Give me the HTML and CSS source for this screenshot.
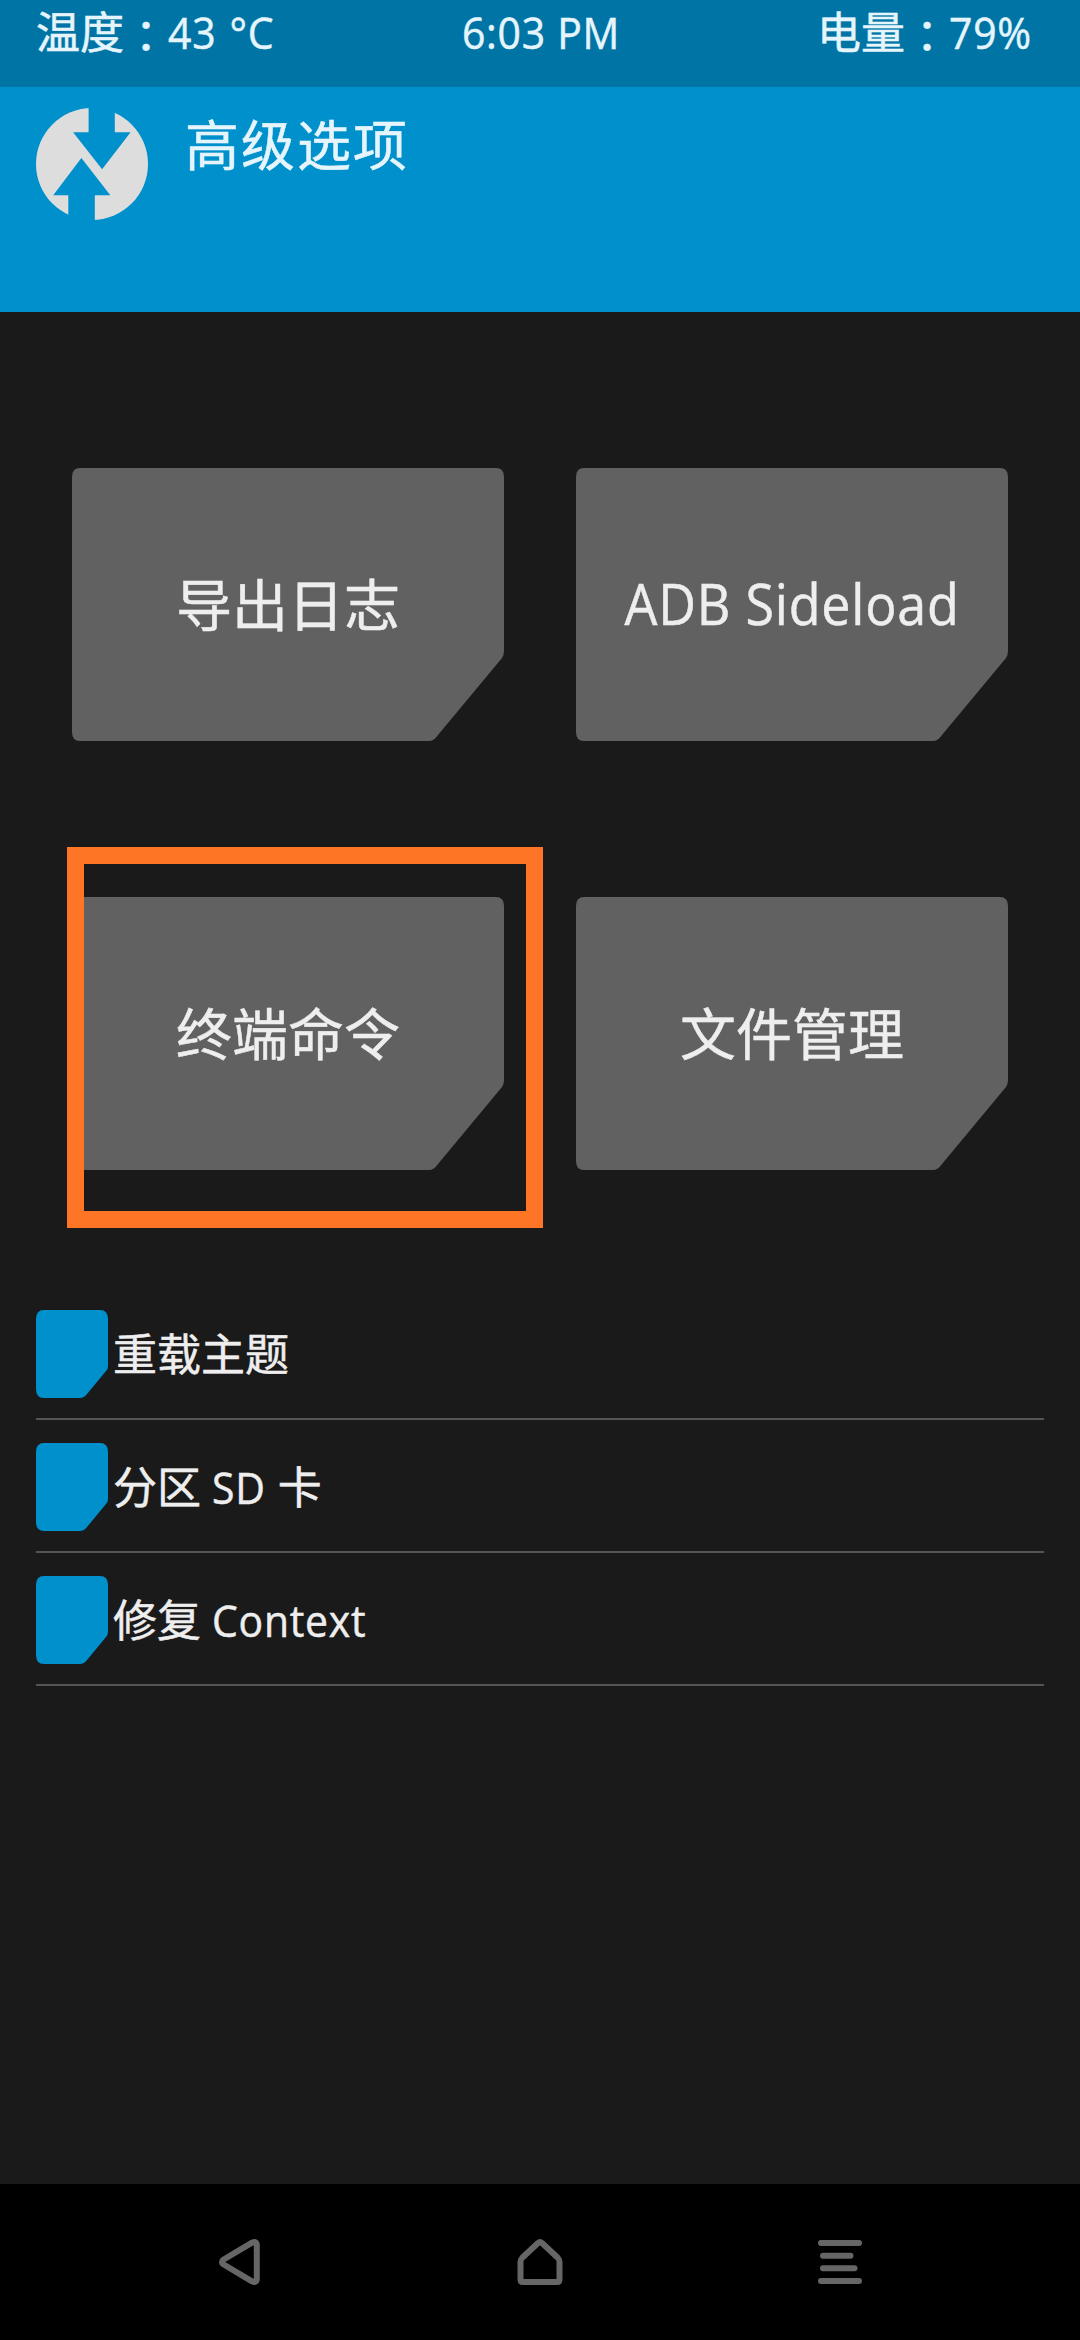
FILE: index.html
```html
<!DOCTYPE html>
<html lang="zh-CN">
<head>
<meta charset="utf-8">
<title>高级选项</title>
<link rel="stylesheet" href="styles.css">
</head>
<body>
<div class="screen">
  <div class="status">
    <span class="status-left">温度<span class="colon" lang="ja">：</span><span class="latin temp">43 °C</span></span>
    <span class="status-mid"><span class="latin time">6:03 PM</span></span>
    <span class="status-right">电量<span class="colon" lang="ja">：</span><span class="latin percent">79%</span></span>
  </div>
  <header class="header">
    <svg class="logo" viewBox="0 0 112 112">
      <circle class="logo-disc" cx="56" cy="56" r="56"/>
      <path class="logo-cut" d="M52.6-1H78.8V24.3H94.6L66.1 61.3L37.1 24.3H52.6ZM45.4 50L74.3 87.3H58.8V113H32.3V87.3H17.2Z"/>
    </svg>
    <h1 class="title">高级选项</h1>
  </header>
  <main class="main">
    <div class="tiles">
      <div class="tile-wrap"><div class="tile">导出日志</div></div>
      <div class="tile-wrap"><div class="tile tile-latin"><span class="latin sideload">ADB Sideload</span></div></div>
      <div class="tile-wrap"><div class="tile">终端命令</div><div class="highlight"></div></div>
      <div class="tile-wrap"><div class="tile">文件管理</div></div>
    </div>
    <ul class="list">
      <li class="row"><span class="chip"></span><span class="label">重载主题</span></li>
      <li class="row"><span class="chip"></span><span class="label">分区 <span class="latin sd">SD</span> 卡</span></li>
      <li class="row"><span class="chip"></span><span class="label">修复 <span class="latin">Context</span></span></li>
    </ul>
  </main>
  <nav class="nav">
    <svg class="nav-icon" viewBox="0 0 50 50"><path d="M6.200 22.500L34.500 5.700Q39.300 3.600 39.300 8.500V41.500Q39.300 46.400 34.500 44.300L6.200 27.500Q2.600 25 6.200 22.500Z" transform="translate(2.500 0)"/></svg>
    <svg class="nav-icon" viewBox="0 0 50 50"><path d="M25 5Q26 5 27 6L42.500 20.500Q44.500 22.500 44.500 24.500V42.500Q44.500 45 42 45H8Q5.500 45 5.500 42.500V24.500Q5.500 22.500 7.500 20.500L23 6Q24 5 25 5Z"/></svg>
    <svg class="nav-icon" viewBox="0 0 50 50"><path d="M6 6H44M8 18.700H35.500M8 31.300H39.500M6 44H44"/></svg>
  </nav>
</div>
</body>
</html>
```

FILE: styles.css
```css
* { box-sizing: border-box; }

body {
  margin: 0;
  background: #1a1a1a;
}

.screen {
  width: 1080px;
  height: 2340px;
  display: flex;
  flex-direction: column;
  overflow: hidden;
  font-family: "Open Sans", "Noto Sans CJK SC", sans-serif;
  -webkit-text-stroke: 0.5px currentColor;
  color: #eee;
}

/* Latin runs are slightly condensed and tracked out */
.latin {
  display: inline-block;
  transform: scaleX(0.93);
  transform-origin: left;
  letter-spacing: 0.8px;
}

.status {
  height: 87px;
  padding: 0 36px;
  display: grid;
  grid-template-columns: 1fr auto 1fr;
  background: #0075a5;
  color: #e6f5fc;
  font-size: 44px;
  line-height: 64px;
  white-space: nowrap;
}

.status-right {
  padding-right: 11px;
  text-align: right;
}

.time {
  padding-left: 2px;
  transform-origin: center;
}

.temp { word-spacing: 2px; }

.percent {
  width: 84px;
  text-align: left;
}

.colon {
  position: relative;
  top: 4px;
  font-family: "Noto Sans CJK JP", sans-serif;
  line-height: 1;
}

.header {
  height: 225px;
  padding: 21px 36px;
  display: flex;
  align-items: flex-start;
  gap: 37px;
  background: #0090cc;
}

.logo { width: 112px; height: 112px; }
.logo-disc { fill: #ddd; }
.logo-cut { fill: #0090cc; }

.title {
  margin: 0;
  font-size: 54px;
  font-weight: 400;
  line-height: 75px;
  letter-spacing: 2px;
  color: #e6f5fc;
}

.main {
  flex: 1;
  padding: 156px 36px 0;
}

.tiles {
  display: grid;
  grid-template-columns: 432px 432px;
  gap: 156px 72px;
  padding: 0 36px;
}

.tile-wrap { position: relative; }

.tile {
  height: 273px;
  padding-bottom: 6px;
  display: flex;
  align-items: center;
  justify-content: center;
  background: #616161;
  clip-path: path("M8 0H424Q432 0 432 9V183Q432 187 430 190L366 267Q362 273 357 273H8Q0 273 0 264V9Q0 0 8 0Z");
  font-size: 56px;
}

.tile-latin { padding-bottom: 3px; }
.sideload { transform-origin: center; }

.highlight {
  position: absolute;
  left: -5px;
  top: -50px;
  width: 476px;
  height: 381px;
  border: 17px solid #ff7526;
}

.list {
  margin: 117px 0 0;
  padding: 0;
  list-style: none;
}

.row {
  height: 133px;
  padding-top: 23px;
  display: flex;
  gap: 5px;
  border-bottom: 2px solid #555;
}

.chip {
  width: 72px;
  height: 88px;
  background: #0090cc;
  clip-path: path("M8 0H64Q72 0 72 9V56Q72 59 70 61L51 84Q48 88 44 88H8Q0 88 0 79V9Q0 0 8 0Z");
}

.label {
  font-size: 44px;
  line-height: 88px;
}

.sd { width: 54px; }

.nav {
  height: 156px;
  padding: 0 90px;
  display: grid;
  grid-template-columns: repeat(3, 1fr);
  place-items: center;
  background: #000;
}

.nav-icon {
  width: 50px;
  height: 50px;
  fill: none;
  stroke: #666;
  stroke-width: 6;
  stroke-linecap: round;
  stroke-linejoin: round;
}
```
